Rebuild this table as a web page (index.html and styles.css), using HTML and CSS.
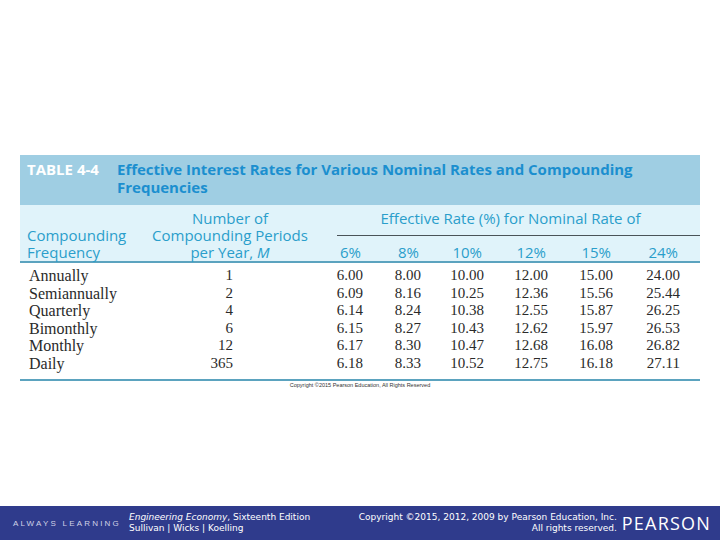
FILE: index.html
```html
<!DOCTYPE html>
<html>
<head>
<meta charset="utf-8">
<link rel="stylesheet" href="styles.css">
</head>
<body>
<div class="page">
  <main class="main">
    <section class="table">
      <div class="caption">
        <div class="label">TABLE 4-4</div>
        <div class="title">Effective Interest Rates for Various Nominal Rates and Compounding Frequencies</div>
      </div>
      <div class="thead">
        <div class="h c1 r2">Compounding</div>
        <div class="h c1 r3">Frequency</div>
        <div class="h c2 r1">Number of</div>
        <div class="h c2 r2">Compounding Periods</div>
        <div class="h c2 r3">per Year, <i>M</i></div>
        <div class="h span">Effective Rate (%) for Nominal Rate of</div>
        <div class="h pct r3">6%</div>
        <div class="h pct r3">8%</div>
        <div class="h pct r3">10%</div>
        <div class="h pct r3">12%</div>
        <div class="h pct r3">15%</div>
        <div class="h pct r3">24%</div>
      </div>
      <div class="tbody">
        <div class="row"><span class="name">Annually</span><span class="m">1</span><span>6.00</span><span>8.00</span><span>10.00</span><span>12.00</span><span>15.00</span><span>24.00</span></div>
        <div class="row"><span class="name">Semiannually</span><span class="m">2</span><span>6.09</span><span>8.16</span><span>10.25</span><span>12.36</span><span>15.56</span><span>25.44</span></div>
        <div class="row"><span class="name">Quarterly</span><span class="m">4</span><span>6.14</span><span>8.24</span><span>10.38</span><span>12.55</span><span>15.87</span><span>26.25</span></div>
        <div class="row"><span class="name">Bimonthly</span><span class="m">6</span><span>6.15</span><span>8.27</span><span>10.43</span><span>12.62</span><span>15.97</span><span>26.53</span></div>
        <div class="row"><span class="name">Monthly</span><span class="m">12</span><span>6.17</span><span>8.30</span><span>10.47</span><span>12.68</span><span>16.08</span><span>26.82</span></div>
        <div class="row"><span class="name">Daily</span><span class="m">365</span><span>6.18</span><span>8.33</span><span>10.52</span><span>12.75</span><span>16.18</span><span>27.11</span></div>
      </div>
      <div class="copy">Copyright ©2015 Pearson Education, All Rights Reserved</div>
    </section>
  </main>
  <footer class="footer">
    <div class="always">ALWAYS LEARNING</div>
    <div class="book">
      <div><i>Engineering Economy</i>, Sixteenth Edition</div>
      <div>Sullivan | Wicks | Koelling</div>
    </div>
    <div class="rights">
      <div>Copyright ©2015, 2012, 2009 by Pearson Education, Inc.</div>
      <div>All rights reserved.</div>
    </div>
    <div class="pearson">PEARSON</div>
  </footer>
</div>
</body>
</html>
```

FILE: styles.css
```css
* { box-sizing: border-box; }
html, body { margin: 0; padding: 0; background: #fff; }
.page {
  width: 720px;
  height: 540px;
  display: flex;
  flex-direction: column;
  overflow: hidden;
}
.main {
  flex: 1;
  padding-top: 155px;
}
.table {
  margin-left: 20px;
  width: 680px;
}
.caption {
  display: flex;
  height: 50px;
  padding: 5px 0 0 7px;
  background: #9fcee3;
  font-family: "Open Sans", "Liberation Sans", sans-serif;
  font-weight: 700;
  font-size: 15px;
  line-height: 18px;
}
.label {
  width: 90px;
  flex: none;
  color: #ffffff;
}
.title {
  max-width: 545px;
  color: #1b8fcf;
}
.thead {
  display: grid;
  grid-template-columns: 130px 160px 53px 58px 63px 64px 65px 67px 20px;
  grid-template-rows: 17px 17px 17px;
  height: 58px;
  padding-top: 5px;
  background: #e0f3fa;
  border-bottom: 2px solid #5ba3bf;
  font-family: "Open Sans", "Liberation Sans", sans-serif;
  font-size: 15px;
  line-height: 17px;
  color: #2a9ecb;
}
.h { white-space: nowrap; }
.c1 { grid-column: 1; padding-left: 7px; }
.c2 { grid-column: 2; text-align: center; }
.r1 { grid-row: 1; }
.r2 { grid-row: 2; }
.r3 { grid-row: 3; }
.span {
  grid-column: 3 / 10;
  grid-row: 1 / span 2;
  align-self: start;
  height: 26px;
  margin-left: 27px;
  padding-right: 16px;
  text-align: center;
  border-bottom: 1.5px solid #4a5358;
}
.pct {
  text-align: right;
  padding-right: 2px;
}
.tbody {
  padding: 4px 0 6px;
  border-bottom: 2px solid #5ba3bf;
  font-family: "Liberation Serif", "DejaVu Serif", serif;
  color: #2a2a2a;
}
.row {
  display: grid;
  grid-template-columns: 130px 160px 53px 58px 63px 64px 65px 67px 20px;
  height: 17.6px;
  line-height: 17.6px;
  font-size: 15px;
}
.row span { text-align: right; white-space: nowrap; }
.row .name {
  text-align: left;
  padding-left: 9px;
  font-size: 16px;
}
.row .m { padding-right: 77px; }
.copy {
  padding-top: 1px;
  text-align: center;
  font-family: "Liberation Sans", sans-serif;
  font-size: 5.5px;
  line-height: 7px;
  color: #333;
}
.footer {
  height: 34px;
  flex: none;
  display: flex;
  align-items: center;
  padding: 0 9px 0 13px;
  background: #2f3b8c;
  color: #ffffff;
  font-family: "DejaVu Sans", "Liberation Sans", sans-serif;
  font-size: 9px;
  line-height: 11px;
}
.always {
  font-family: "Liberation Sans", sans-serif;
  font-size: 8px;
  letter-spacing: 2.2px;
  color: #cfd2e6;
  margin-right: 8px;
}
.rights {
  margin-left: auto;
  text-align: right;
}
.pearson {
  margin-left: 5px;
  font-family: "Open Sans", "Liberation Sans", sans-serif;
  font-size: 18px;
  line-height: 20px;
  letter-spacing: 1.2px;
  color: #ffffff;
}
```
